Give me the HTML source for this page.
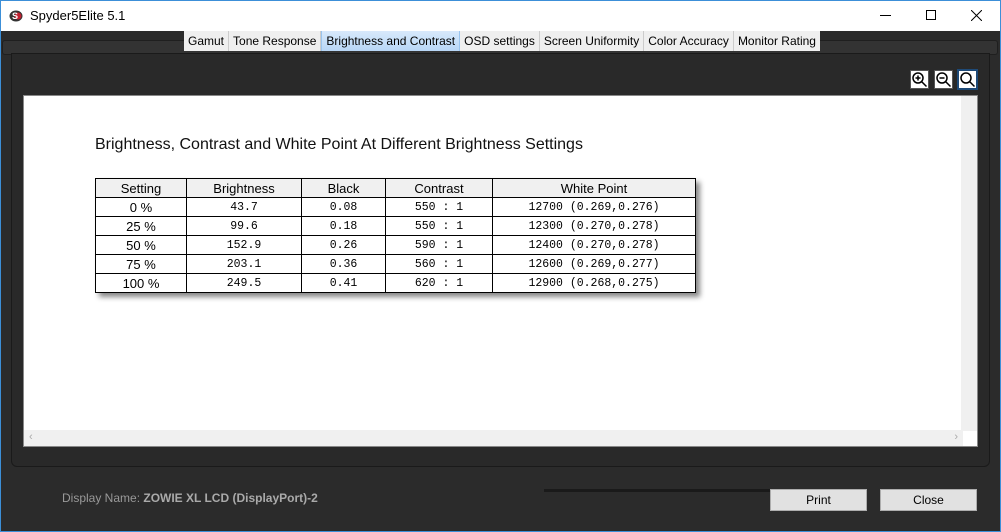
<!DOCTYPE html>
<html><head><meta charset="utf-8"><style>
*{margin:0;padding:0;box-sizing:border-box}
body{width:1001px;height:532px;overflow:hidden;background:#2b2b2b;font-family:"Liberation Sans",sans-serif;position:relative}
.frame{position:absolute;inset:0;border:1px solid #3c8fd8;pointer-events:none;z-index:9}
.title{position:absolute;left:0;top:0;width:1001px;height:31px;background:#fff;font-size:12px;color:#000}
.title .t{position:absolute;left:30px;top:9px}
.tabs{position:absolute;left:184px;top:31px;height:20px;display:flex;background:#f0f0f0;border-radius:0 0 3px 3px}
.tab{font-size:12px;padding:3px 4px 0 4px;border-right:1px solid #ccc;color:#000;height:20px;background:#efefef;white-space:nowrap}
.tab.a{background:linear-gradient(#d8e9fb,#b7d6f6);border-left:1px solid #99c4ee;border-right:1px solid #99c4ee}
.panel{position:absolute;left:11px;top:53px;width:979px;height:414px;background:#292929;border:1px solid #1a1a1a;border-radius:0 0 6px 6px}
.content{position:absolute;left:23px;top:95px;width:955px;height:352px;background:#fff;border:1px solid #888}
.h{position:absolute;left:71px;top:40px;font-size:16px;color:#111}
table{position:absolute;left:71px;top:82px;border-collapse:collapse;box-shadow:4px 4px 5px #888;font-size:13px}
td,th{border:1px solid #000;height:19px;text-align:center;padding:0}
th{font-weight:normal;background:#f0f0f0}
td.m{font-family:"Liberation Mono",monospace;font-size:11.5px}
.vs{position:absolute;right:0;top:0;width:16px;height:335px;background:#f0f0f0}
.hs{position:absolute;left:0;bottom:0;width:939px;height:16px;background:#f0f0f0;color:#aaa;font-size:11px}
.btn{position:absolute;top:489px;width:97px;height:22px;background:#e1e1e1;border:1px solid #adadad;font-size:12px;text-align:center;line-height:20px;color:#000}
.zb{position:absolute;top:70px;width:19px;height:19px;background:#fff;border:1px solid #555}
</style></head><body>
<div class="title">
<svg style="position:absolute;left:9px;top:9px" width="14" height="13"><ellipse cx="7" cy="7" rx="6.5" ry="5.5" fill="#333"/><circle cx="9" cy="7" r="3.5" fill="#c02030"/><text x="3" y="10" font-size="9" font-weight="bold" fill="#fff" font-family="Liberation Sans">S</text></svg>
<span class="t" style="font-size:13px;top:8px">Spyder5Elite 5.1</span>
<div style="position:absolute;left:880px;top:15px;width:11px;height:1px;background:#000"></div>
<div style="position:absolute;left:926px;top:10px;width:10px;height:10px;border:1px solid #000"></div>
<svg style="position:absolute;left:971px;top:10px" width="11" height="11"><path d="M0 0L11 11M11 0L0 11" stroke="#000" stroke-width="1"/></svg>
</div>
<div style="position:absolute;left:2px;top:40px;width:996px;height:15px;background:#333;border-radius:3px;border:1px solid #1f1f1f"></div>
<div class="tabs">
<div class="tab">Gamut</div><div class="tab">Tone Response</div><div class="tab a">Brightness and Contrast</div><div class="tab">OSD settings</div><div class="tab">Screen Uniformity</div><div class="tab">Color Accuracy</div><div class="tab" style="border-right:none">Monitor Rating</div>
</div>
<div class="panel"></div>
<div class="zb" style="left:910px"><svg width="17" height="17"><circle cx="7" cy="7" r="5" fill="none" stroke="#000" stroke-width="1.5"/><path d="M4.5 7h5M7 4.5v5M10.5 10.5l5 5" stroke="#000" stroke-width="1.5"/></svg></div>
<div class="zb" style="left:934px"><svg width="17" height="17"><circle cx="7" cy="7" r="5" fill="none" stroke="#000" stroke-width="1.5"/><path d="M4.5 7h5M10.5 10.5l5 5" stroke="#000" stroke-width="1.5"/></svg></div>
<div class="zb" style="left:957px;border:2px solid #1e4a78;width:21px;height:21px;top:69px"><svg width="17" height="17"><circle cx="7" cy="7" r="5" fill="none" stroke="#000" stroke-width="1.5"/><path d="M10.5 10.5l5 5" stroke="#000" stroke-width="1.5"/></svg></div>
<div class="content">
<div class="h">Brightness, Contrast and White Point At Different Brightness Settings</div>
<table>
<tr><th style="width:91px">Setting</th><th style="width:115px">Brightness</th><th style="width:84px">Black</th><th style="width:107px">Contrast</th><th style="width:203px">White Point</th></tr>
<tr><td>0 %</td><td class="m">43.7</td><td class="m">0.08</td><td class="m">550 : 1</td><td class="m">12700 (0.269,0.276)</td></tr>
<tr><td>25 %</td><td class="m">99.6</td><td class="m">0.18</td><td class="m">550 : 1</td><td class="m">12300 (0.270,0.278)</td></tr>
<tr><td>50 %</td><td class="m">152.9</td><td class="m">0.26</td><td class="m">590 : 1</td><td class="m">12400 (0.270,0.278)</td></tr>
<tr><td>75 %</td><td class="m">203.1</td><td class="m">0.36</td><td class="m">560 : 1</td><td class="m">12600 (0.269,0.277)</td></tr>
<tr><td>100 %</td><td class="m">249.5</td><td class="m">0.41</td><td class="m">620 : 1</td><td class="m">12900 (0.268,0.275)</td></tr>
</table>
<div class="vs"></div>
<div class="hs"><span style="position:absolute;left:5px;top:1px">&lsaquo;</span><span style="position:absolute;right:5px;top:1px">&rsaquo;</span></div>
</div>
<div style="position:absolute;left:62px;top:491px;font-size:12px;color:#999">Display Name: <b style="color:#aaa">ZOWIE XL LCD (DisplayPort)-2</b></div>
<div style="position:absolute;left:544px;top:489px;width:230px;height:3px;background:#1a1a1a"></div>
<div class="btn" style="left:770px">Print</div>
<div class="btn" style="left:880px">Close</div>
<div class="frame"></div>
</body></html>
